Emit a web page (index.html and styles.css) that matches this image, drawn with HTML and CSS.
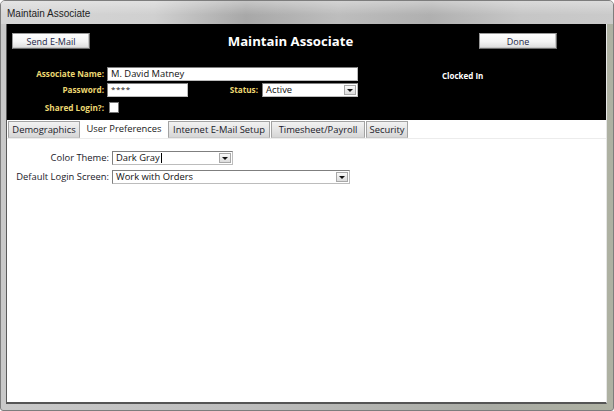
FILE: index.html
```html
<!DOCTYPE html>
<html>
<head>
<meta charset="utf-8">
<link rel="stylesheet" href="styles.css">
</head>
<body>
<div class="window">
  <div class="titlebar"><span class="wtitle">Maintain Associate</span></div>
  <div class="frame">
    <div class="client">
      <div class="header">
        <div class="toprow">
          <div class="btn">Send E-Mail</div>
          <div class="title">Maintain Associate</div>
          <div class="btn">Done</div>
        </div>
        <div class="fields">
          <div class="lbl r1">Associate Name:</div>
          <div class="input name">M. David Matney</div>
          <div class="clocked">Clocked In</div>
          <div class="lbl r2">Password:</div>
          <div class="input pwd">****</div>
          <div class="lbl status">Status:</div>
          <div class="input select stsel"><span class="val">Active</span><span class="drop"><span class="tri"></span></span></div>
          <div class="lbl r3">Shared Login?:</div>
          <div class="check"></div>
        </div>
      </div>
      <div class="tabs">
        <div class="tab t1">Demographics</div>
        <div class="tab active t2">User Preferences</div>
        <div class="tab t3">Internet E-Mail Setup</div>
        <div class="tab t4">Timesheet/Payroll</div>
        <div class="tab t5">Security</div>
      </div>
      <div class="body">
        <div class="prefs">
          <div class="plbl">Color Theme:</div>
          <div class="input select theme"><span class="val">Dark Gray<span class="caret"></span></span><span class="drop"><span class="tri"></span></span></div>
          <div class="plbl">Default Login Screen:</div>
          <div class="input select login"><span class="val">Work with Orders</span><span class="drop"><span class="tri"></span></span></div>
        </div>
      </div>
    </div>
  </div>
</div>
</body>
</html>
```

FILE: styles.css
```css
* { box-sizing: border-box; }
html, body { margin: 0; padding: 0; background: #fff; }
body { font-family: "Open Sans", "DejaVu Sans", sans-serif; }

.window {
  width: 614px;
  height: 411px;
  display: flex;
  flex-direction: column;
  background: linear-gradient(to right, #c9c9c9 0%, #bdbdbd 40%, #a9aba4 80%, #aeb1a2 100%);
  border: 1px solid #7d7d7d;
  border-radius: 5px 5px 3px 3px;
  overflow: hidden;
}

.titlebar {
  height: 23px;
  flex: none;
  display: flex;
  align-items: center;
  padding-left: 6px;
  background:
    linear-gradient(to bottom, rgba(255,255,255,0.35), rgba(255,255,255,0) 60%),
    linear-gradient(to right, #d6d6d6 0%, #d0d0d0 25%, #a8a8a8 40%, #bdbdbd 55%, #b0b0b0 70%, #c6c6c6 85%, #cacaca 100%);
}
.wtitle {
  font-family: "Liberation Sans", Arial, sans-serif;
  font-size: 10px;
  color: #1e1e1e;
  position: relative;
  top: 1px;
}

.frame {
  flex: 1;
  padding: 0 6px 6px 5px;
  display: flex;
}

.client {
  flex: 1;
  display: flex;
  flex-direction: column;
  border-left: 1px solid #5a5a5a;
  border-right: 1px solid #e6e6e6;
  border-bottom: 2px solid #555;
  background: #fff;
}

.header {
  height: 96px;
  flex: none;
  background: #000;
  padding-top: 9px;
}

.toprow {
  display: flex;
  align-items: center;
  padding-left: 5px;
}
.btn {
  width: 78px;
  height: 16px;
  flex: none;
  background: linear-gradient(to bottom, #ffffff 0%, #f4f4f4 55%, #dcdcdc 100%);
  border: 1px solid #9a9a9a;
  border-right-color: #6d6d6d;
  border-bottom-color: #6d6d6d;
  box-shadow: inset -1px -1px 0 #c8c8c8;
  color: #1b2545;
  font-size: 9px;
  display: flex;
  align-items: center;
  justify-content: center;
  line-height: 1;
}
.title {
  width: 389px;
  flex: none;
  text-align: center;
  padding-left: 12px;
  color: #fff;
  font-weight: bold;
  font-size: 13.2px;
  line-height: 16px;
}

.fields {
  display: grid;
  grid-template-columns: 100px 81px 74px 96px 1fr;
  grid-template-rows: 14px 14px 11px;
  row-gap: 2px;
  margin-top: 18px;
}
.lbl {
  color: #ecd873;
  font-weight: bold;
  font-size: 8.2px;
  text-align: right;
  padding-right: 3px;
  line-height: 14px;
  white-space: nowrap;
}
.r1 { grid-row: 1; grid-column: 1; }
.r2 { grid-row: 2; grid-column: 1; }
.r3 { grid-row: 3; grid-column: 1; line-height: 11px; margin-top: 3px; }
.status { grid-row: 2; grid-column: 3; padding-right: 4px; }

.input {
  background: #fff;
  border: 1px solid #7f7f7f;
  border-right-color: #bcbcbc;
  border-bottom-color: #bcbcbc;
  font-size: 9.4px;
  color: #111;
  line-height: 12px;
  padding-left: 3px;
  white-space: nowrap;
  overflow: hidden;
}
.name { grid-row: 1; grid-column: 2 / 5; }
.pwd { grid-row: 2; grid-column: 2; font-size: 8px; letter-spacing: 0.5px; line-height: 10px; }
.stsel { grid-row: 2; grid-column: 4; }
.clocked {
  grid-row: 1;
  grid-column: 5;
  color: #fff;
  font-weight: bold;
  font-size: 8px;
  padding-left: 84px;
  line-height: 14px;
  margin-top: 2px;
  white-space: nowrap;
}
.check {
  grid-row: 3;
  grid-column: 2;
  width: 10px;
  height: 11px;
  margin-left: 2px;
  margin-top: 3px;
  background: #fff;
  border: 1px solid #777;
}

.select {
  display: flex;
  align-items: stretch;
  padding-right: 1px;
}
.select .val { flex: 1; position: relative; }
.drop {
  width: 12px;
  margin: 1px 0 1px 0;
  background: linear-gradient(to bottom, #fafafa, #dcdcdc);
  border: 1px solid #a8a8a8;
  display: flex;
  align-items: flex-end;
  justify-content: center;
  padding-bottom: 2px;
}
.tri {
  width: 0;
  height: 0;
  border-left: 3px solid transparent;
  border-right: 3px solid transparent;
  border-top: 3px solid #111;
}
.caret {
  display: inline-block;
  width: 1px;
  height: 10px;
  background: #000;
  vertical-align: -2px;
  margin-left: 1px;
}

.tabs {
  height: 19px;
  flex: none;
  display: flex;
  gap: 1px;
  padding: 1px 0 0 1px;
  border-bottom: 1px solid #ececec;
  background: #fff;
}
.tab {
  height: 17px;
  font-size: 9.4px;
  color: #1a1a2a;
  display: flex;
  align-items: center;
  justify-content: center;
  background: linear-gradient(to bottom, #f2f2f2 0%, #e2e2e2 60%, #d6d6d6 100%);
  border: 1px solid #a3a3a3;
  border-bottom-color: #c9c9c9;
  white-space: nowrap;
}
.tab.active {
  background: #fff;
  border-color: #fff;
  align-items: flex-start;
  padding-top: 0;
  color: #222;
}
.t1 { width: 72px; }
.t2 { width: 86px; }
.t3 { width: 102px; }
.t4 { width: 94px; }
.t5 { width: 42px; }

.body {
  flex: 1;
  background: #fff;
  padding-top: 12px;
}
.prefs {
  display: grid;
  grid-template-columns: 105px auto;
  grid-template-rows: 14px 14px;
  row-gap: 5px;
  justify-content: start;
}
.plbl {
  font-size: 9.4px;
  color: #1a1a2a;
  text-align: right;
  padding-right: 3px;
  line-height: 14px;
  white-space: nowrap;
}
.theme { width: 121px; }
.login { width: 238px; }
```
